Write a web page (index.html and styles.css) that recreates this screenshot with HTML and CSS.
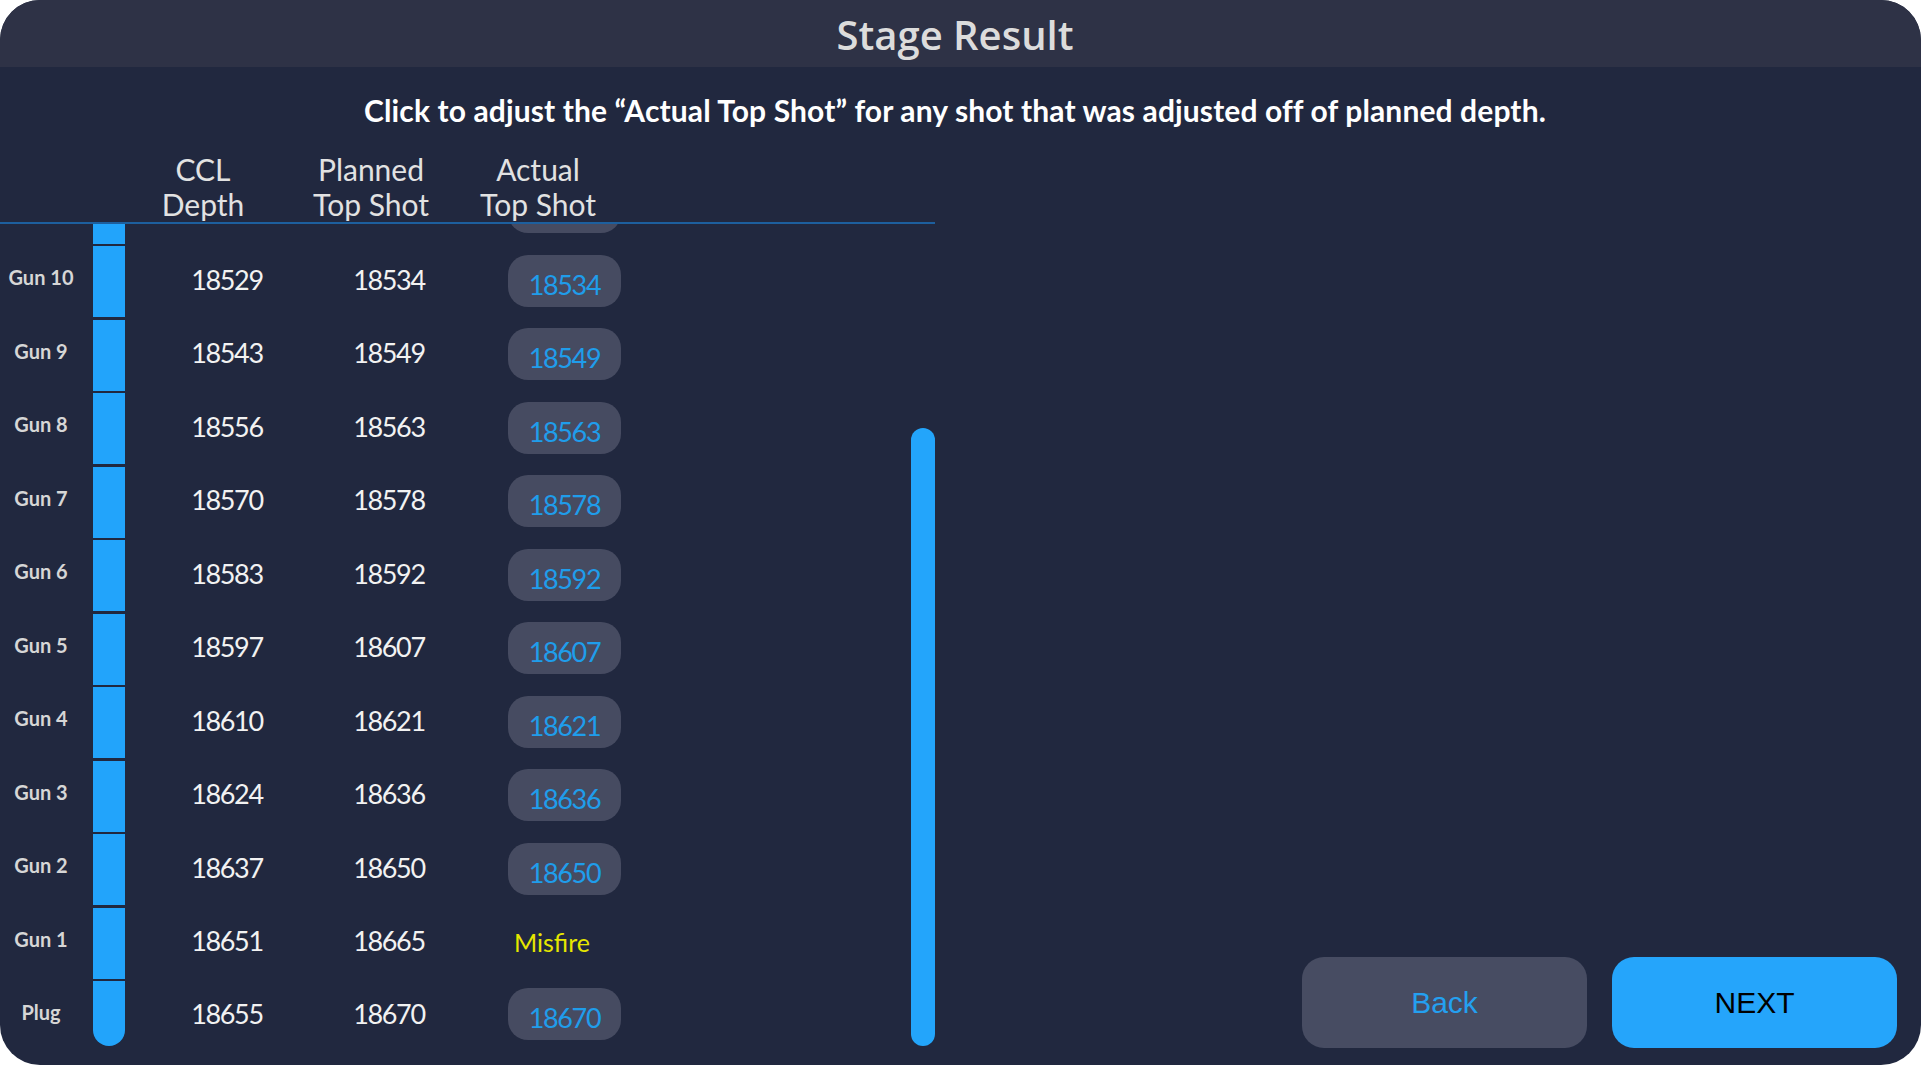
FILE: index.html
```html
<!DOCTYPE html>
<html lang="en">
<head>
<meta charset="utf-8">
<title>Stage Result</title>
<link rel="stylesheet" href="styles.css">
</head>
<body>
<div class="app">
  <header class="header"><h1 class="title">Stage Result</h1></header>
  <p class="subtitle">Click to adjust the “Actual Top Shot” for any shot that was adjusted off of planned depth.</p>
  <div class="content">
    <section class="table">
      <div class="colheads">
        <div class="h-spacer"></div>
        <div class="h-cell h-ccl">CCL<br>Depth</div>
        <div class="h-cell h-plan">Planned<br>Top Shot</div>
        <div class="h-cell h-act">Actual<br>Top Shot</div>
      </div>
      <div class="body">
        <div class="list">
          <div class="row"><div class="lbl">Gun 11</div><div class="seg"></div><div class="ccl">18515</div><div class="plan">18520</div><div class="act"><span class="btn-val">18520</span></div></div>
          <div class="row"><div class="lbl">Gun 10</div><div class="seg"></div><div class="ccl">18529</div><div class="plan">18534</div><div class="act"><span class="btn-val">18534</span></div></div>
          <div class="row"><div class="lbl">Gun 9</div><div class="seg"></div><div class="ccl">18543</div><div class="plan">18549</div><div class="act"><span class="btn-val">18549</span></div></div>
          <div class="row"><div class="lbl">Gun 8</div><div class="seg"></div><div class="ccl">18556</div><div class="plan">18563</div><div class="act"><span class="btn-val">18563</span></div></div>
          <div class="row"><div class="lbl">Gun 7</div><div class="seg"></div><div class="ccl">18570</div><div class="plan">18578</div><div class="act"><span class="btn-val">18578</span></div></div>
          <div class="row"><div class="lbl">Gun 6</div><div class="seg"></div><div class="ccl">18583</div><div class="plan">18592</div><div class="act"><span class="btn-val">18592</span></div></div>
          <div class="row"><div class="lbl">Gun 5</div><div class="seg"></div><div class="ccl">18597</div><div class="plan">18607</div><div class="act"><span class="btn-val">18607</span></div></div>
          <div class="row"><div class="lbl">Gun 4</div><div class="seg"></div><div class="ccl">18610</div><div class="plan">18621</div><div class="act"><span class="btn-val">18621</span></div></div>
          <div class="row"><div class="lbl">Gun 3</div><div class="seg"></div><div class="ccl">18624</div><div class="plan">18636</div><div class="act"><span class="btn-val">18636</span></div></div>
          <div class="row"><div class="lbl">Gun 2</div><div class="seg"></div><div class="ccl">18637</div><div class="plan">18650</div><div class="act"><span class="btn-val">18650</span></div></div>
          <div class="row"><div class="lbl">Gun 1</div><div class="seg"></div><div class="ccl">18651</div><div class="plan">18665</div><div class="misfire">Misfire</div></div>
          <div class="row row-last"><div class="lbl">Plug</div><div class="seg"></div><div class="ccl">18655</div><div class="plan">18670</div><div class="act"><span class="btn-val">18670</span></div></div>
        </div>
        <div class="track"><div class="thumb"></div></div>
      </div>
    </section>
    <div class="actions">
      <button class="btn btn-back" type="button">Back</button>
      <button class="btn btn-next" type="button">NEXT</button>
    </div>
  </div>
</div>
</body>
</html>
```

FILE: styles.css
```css
* { box-sizing: border-box; }
html, body { margin: 0; padding: 0; background: #ffffff; }
body { font-family: "Lato", "Open Sans", sans-serif; }

.app {
  width: 1921px;
  height: 1065px;
  border-radius: 40px;
  overflow: hidden;
  background: #21283f;
  display: flex;
  flex-direction: column;
}

.header {
  height: 67px;
  flex-shrink: 0;
  background: #2e3246;
  display: flex;
  align-items: center;
  justify-content: center;
  padding-right: 11px;
}
.title {
  margin: 0;
  font-family: "Open Sans", sans-serif;
  font-weight: 600;
  font-size: 40px;
  line-height: 1;
  color: #dcdcdc;
  padding-top: 2px;
}

.subtitle {
  margin: 0;
  height: 85px;
  flex-shrink: 0;
  padding-top: 26px;
  text-align: center;
  padding-right: 11px;
  font-family: "Lato", sans-serif;
  font-weight: 700;
  font-size: 30px;
  letter-spacing: 0.12px;
  line-height: 34px;
  color: #ffffff;
  white-space: nowrap;
}

.content {
  flex: 1;
  display: flex;
  min-height: 0;
}

.table {
  width: 935px;
  flex-shrink: 0;
  display: flex;
  flex-direction: column;
  padding-bottom: 19px;
}

.colheads {
  height: 72px;
  flex-shrink: 0;
  display: flex;
  border-bottom: 2px solid #1d5f9e;
  font-size: 30px;
  line-height: 35px;
  color: #e2e2e2;
}
.h-spacer { width: 143px; }
.h-cell { text-align: center; white-space: nowrap; }
.h-ccl { width: 120px; }
.h-plan { width: 130px; margin-left: 43px; }
.h-act { width: 120px; margin-left: 42px; }

.body {
  flex: 1;
  display: flex;
  min-height: 0;
}

.list {
  width: 911px;
  height: 100%;
  overflow: hidden;
  display: flex;
  flex-direction: column;
  justify-content: flex-end;
}

.row {
  height: 73.5px;
  flex-shrink: 0;
  display: flex;
  align-items: center;
}
.row-last { height: 67.5px; }

.lbl {
  width: 82px;
  text-align: center;
  font-weight: 700;
  font-size: 20px;
  color: #d6d6d6;
  margin-top: -6px;
}
.row-last .lbl { margin-top: -1px; }
.seg {
  width: 32px;
  margin-left: 11px;
  align-self: stretch;
  margin-top: 2.5px;
  background: #22a4fb;
}
.row-last .seg { border-radius: 0 0 16px 16px; }

.ccl, .plan {
  text-align: center;
  font-size: 27px;
  letter-spacing: -1.4px;
  color: #f2f2f2;
  line-height: 1;
  margin-top: -2px;
}
.row-last .ccl, .row-last .plan { margin-top: 2px; }
.ccl { width: 204px; }
.plan { width: 120px; }

.act {
  width: 113px;
  height: 52px;
  margin-left: 59px;
  margin-top: 1px;
  border-radius: 20px;
  background: #464b61;
  display: flex;
  justify-content: center;
  align-items: center;
  padding-top: 7px;
}
.row-last .act { margin-top: 4px; }
.btn-val {
  font-size: 27px;
  letter-spacing: -1.4px;
  line-height: 1;
  color: #1f9deb;
}

.misfire {
  margin-left: 65px;
  font-size: 25px;
  line-height: 1;
  color: #e6e600;
  margin-top: 1px;
}

.track {
  width: 24px;
  display: flex;
  flex-direction: column;
  justify-content: flex-end;
}
.thumb {
  height: 618px;
  border-radius: 12px;
  background: #23a5fb;
}

.actions {
  flex: 1;
  display: flex;
  justify-content: flex-end;
  align-items: flex-end;
  gap: 25px;
  padding: 0 24px 17px 0;
}
.btn {
  width: 285px;
  height: 91px;
  border: 0;
  border-radius: 22px;
  font-family: "Liberation Sans", Arial, sans-serif;
  font-size: 30px;
  cursor: pointer;
}
.btn-back { background: #474c62; color: #24a0f0; }
.btn-next { background: #25a5fb; color: #000000; }
```
